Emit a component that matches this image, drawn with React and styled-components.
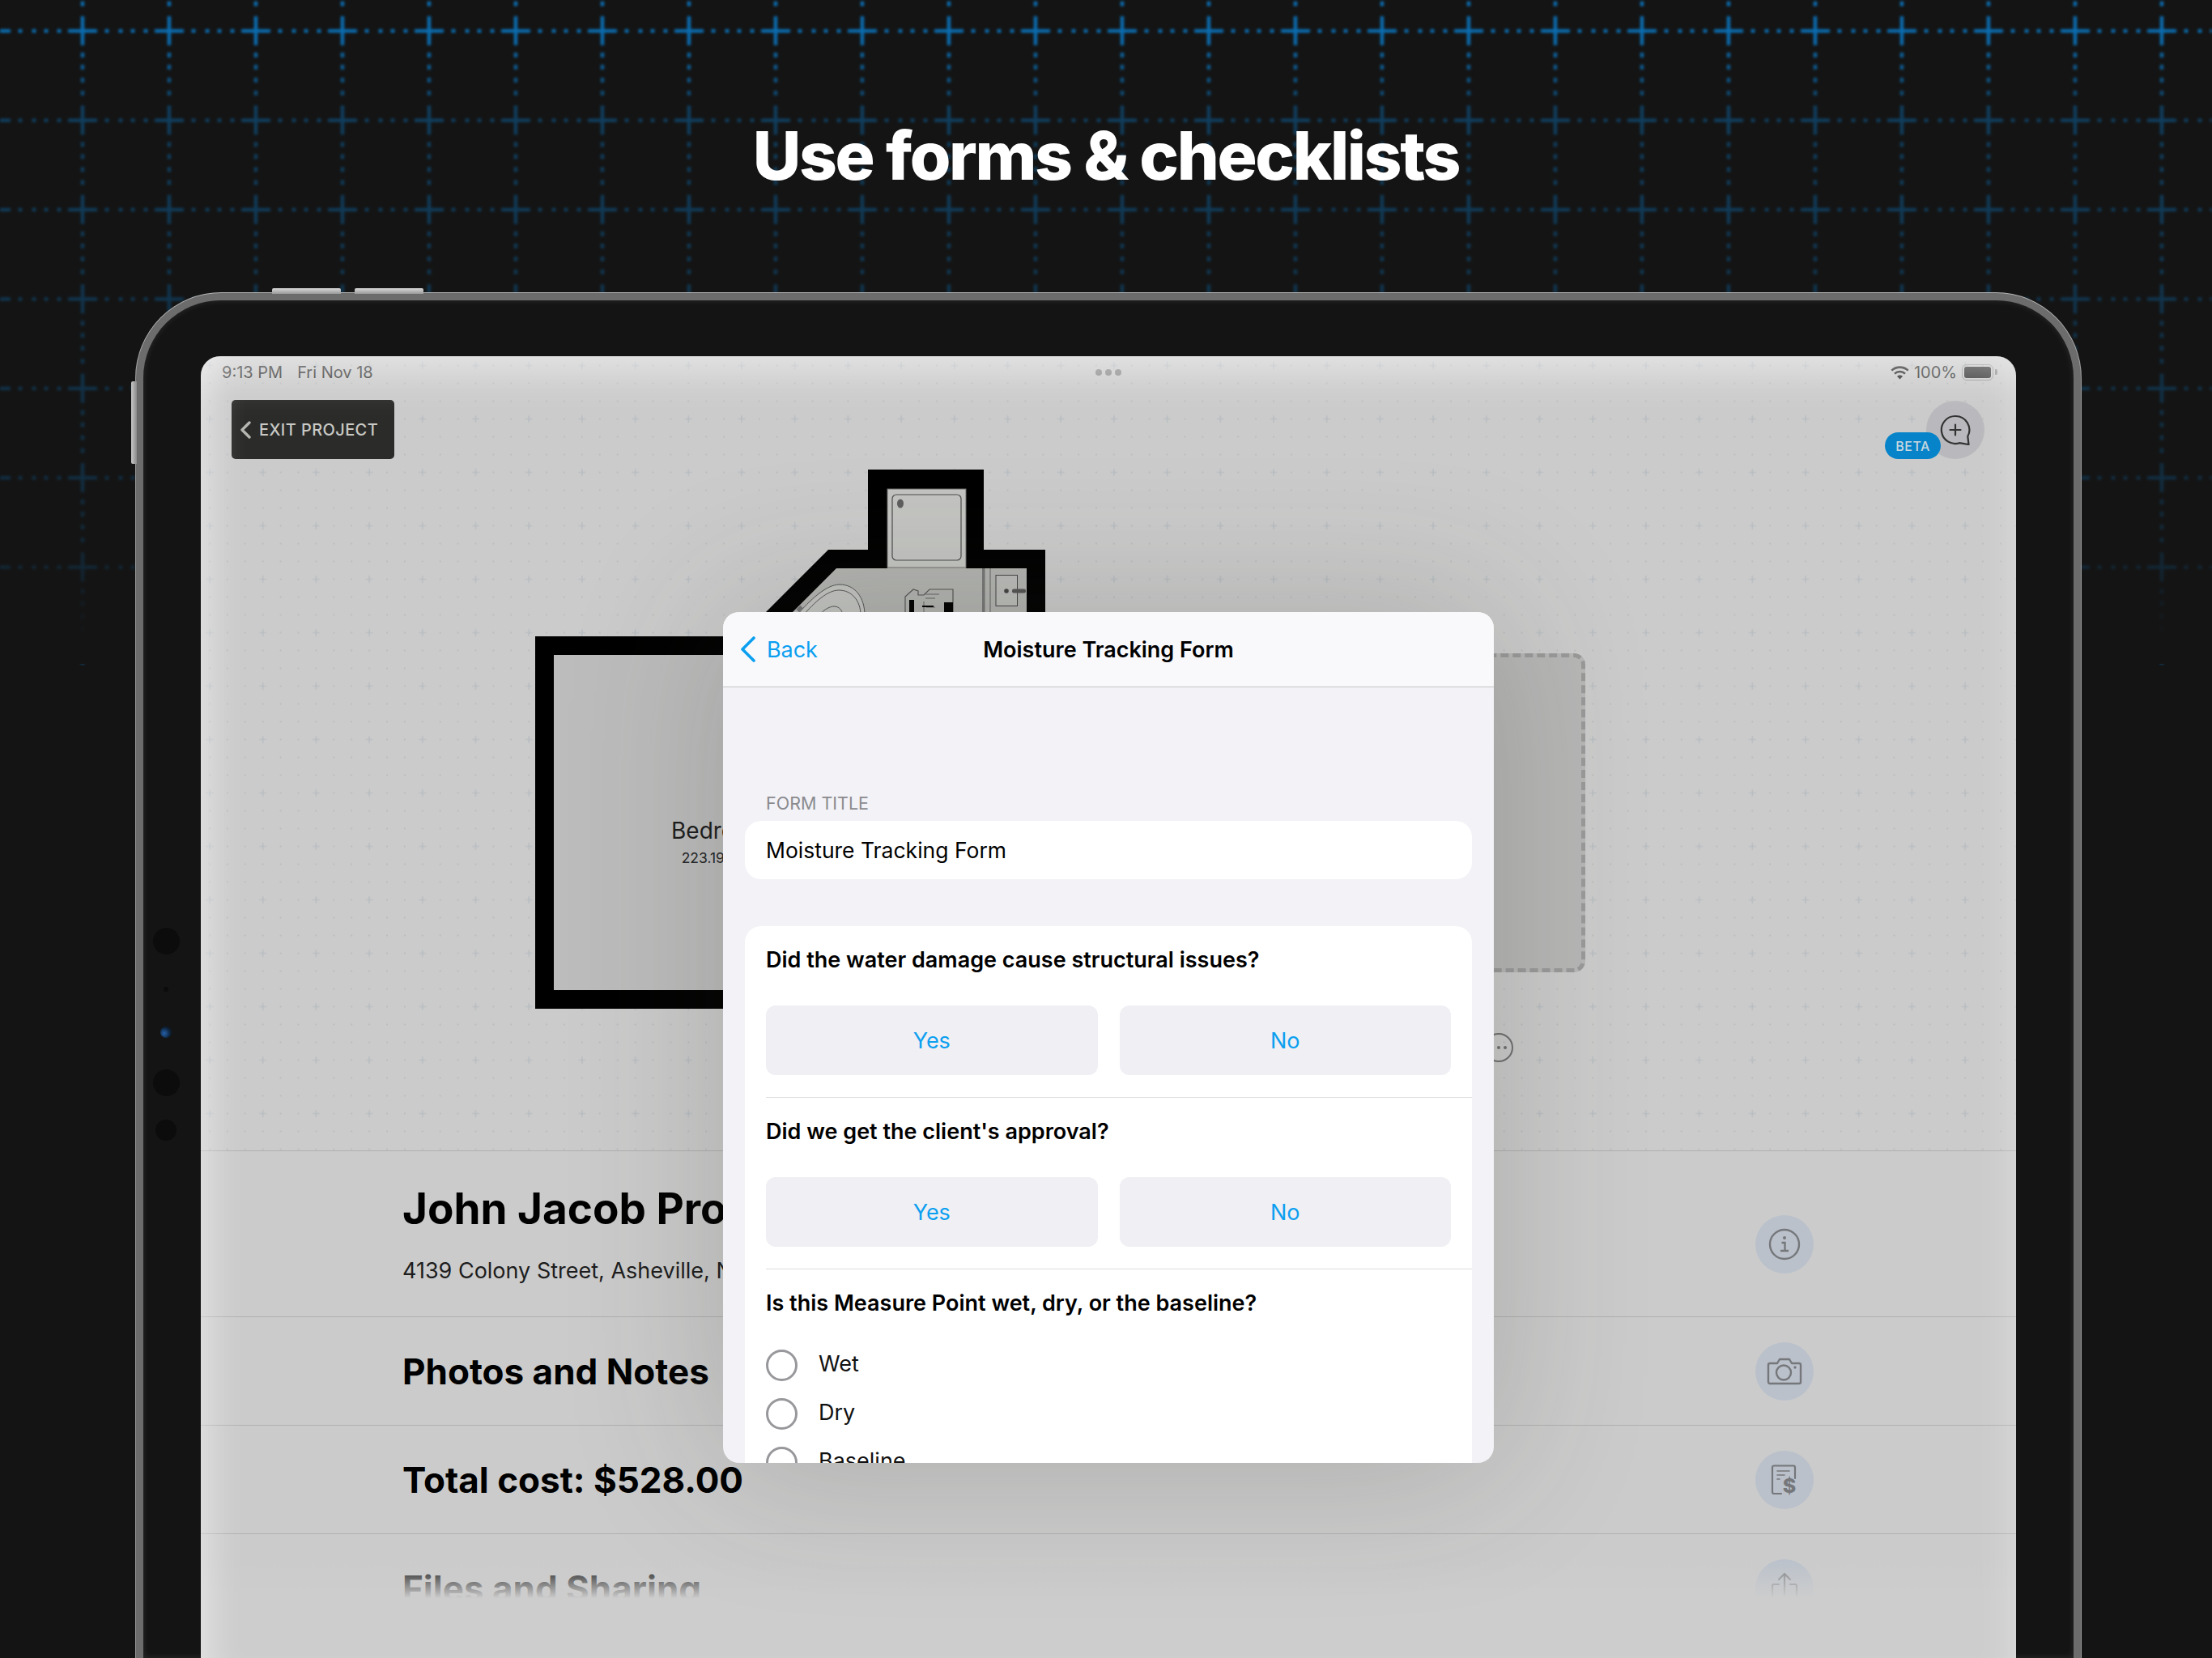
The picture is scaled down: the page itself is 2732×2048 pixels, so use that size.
import React from 'react';
import styled, { createGlobalStyle } from 'styled-components';

const GlobalStyle = createGlobalStyle`
    html, body {
        margin: 0;
        padding: 0;
        background: #141414;
        font-family: "Inter", "Liberation Sans", sans-serif;
    }
    * {
        box-sizing: border-box;
    }
`;

const Page = styled.div`
    position: relative;
    width: 2732px;
    height: 2048px;
    overflow: hidden;
    background: #141414;
    display: flex;
    flex-direction: column;
`;
const Backdrop = styled.div`
    position: absolute;
    inset: 0;
    height: 820px;
    &::after {
        content: '';
        position: absolute;
        inset: 0;
        background: linear-gradient(
            to bottom,
            rgba(20, 20, 20, 0.12) 0,
            rgba(20, 20, 20, 0.12) 50px,
            rgba(20, 20, 20, 0.58) 135px,
            rgba(20, 20, 20, 0.62) 258px,
            rgba(20, 20, 20, 0.68) 370px,
            rgba(20, 20, 20, 0.74) 590px,
            rgba(20, 20, 20, 0.82) 700px,
            rgba(20, 20, 20, 1) 790px
        );
    }
    svg {
        display: block;
        filter: blur(1.6px);
    }
`;
const Title = styled.h1`
    position: relative;
    height: 362px;
    flex: none;
    margin: 0;
    padding-top: 143px;
    text-align: center;
    color: #fff;
    font-family: "Inter", "Lato", sans-serif;
    font-weight: 800;
    font-size: 82px;
    line-height: 100px;
    letter-spacing: -2.4px;
`;
const Device = styled.div`
    position: relative;
    flex: 1;
    width: 2402px;
    margin-left: 168px;
    padding: 69px 71px 0;
    display: flex;
    background: #141414;
    border: 9px solid #6c6c6c;
    border-bottom: none;
    border-radius: 105px 105px 0 0;
    box-shadow: 0 -1px 0 #b5b5b5, -1px 0 0 #9a9a9a, 1px 0 0 #9a9a9a, inset 0 0 8px rgba(255, 255, 255, 0.1);
`;
const TopKey = styled.div`
    position: absolute;
    top: -15px;
    left: ${props => props.$left}px;
    width: 85px;
    height: 7px;
    border-radius: 2px 2px 0 0;
    background: linear-gradient(to bottom, #d8d8d8, #9a9a9a);
`;
const SideKey = styled.div`
    position: absolute;
    left: -15px;
    top: 100px;
    width: 7px;
    height: 102px;
    border-radius: 2px 0 0 2px;
    background: linear-gradient(to right, #c8c8c8, #8a8a8a);
`;
const Sensors = styled.div`
    position: absolute;
    left: 11px;
    top: 775px;
    width: 34px;
    display: flex;
    flex-direction: column;
    align-items: center;
`;
const Sensor = styled.div`
    flex: none;
    width: ${props => props.$size}px;
    height: ${props => props.$size}px;
    margin-top: ${props => props.$gap}px;
    border-radius: 50%;
    background: ${props => (props.$lens ? 'radial-gradient(circle at 35% 60%, #2560a8, #0c2036 60%, #111)' : '#0c0c0c')};
`;
const Screen = styled.div`
    position: relative;
    flex: 1;
    display: flex;
    flex-direction: column;
    overflow: hidden;
    background: #cbcbcb;
    border-radius: 24px 24px 0 0;
    color: #000;
`;

/* floor plan area */
const Canvas = styled.div`
    position: relative;
    flex: none;
    height: 981px;
`;
const DotGrid = styled.svg`
    position: absolute;
    inset: 0;
    width: 100%;
    height: 100%;
`;
const StatusBar = styled.div`
    position: relative;
    height: 40px;
    padding: 0 24px 0 26px;
    display: grid;
    grid-template-columns: 1fr auto 1fr;
    align-items: center;
    font-size: 20px;
    color: #3d3d3d;
`;
const StatusLeft = styled.div`
    display: flex;
    gap: 18px;
`;
const StatusDots = styled.div`
    display: flex;
    gap: 4px;
    margin-left: -3px;
`;
const StatusDot = styled.span`
    width: 8px;
    height: 8px;
    border-radius: 50%;
    background: #8e8e8e;
`;
const StatusRight = styled.div`
    display: flex;
    align-items: center;
    justify-content: flex-end;
    gap: 6px;
`;
const Battery = styled.div`
    position: relative;
    width: 39px;
    height: 20px;
    padding: 2px;
    border: 1.5px solid #9a9a9a;
    border-radius: 6px;
    margin-right: 4px;
    &::before {
        content: '';
        display: block;
        height: 100%;
        border-radius: 3px;
        background: #3b3b3b;
    }
    &::after {
        content: '';
        position: absolute;
        right: -6px;
        top: 5px;
        width: 3px;
        height: 7px;
        border-radius: 0 2px 2px 0;
        background: #8f8f8f;
    }
`;
const ToolRow = styled.div`
    position: relative;
    display: flex;
    justify-content: space-between;
    align-items: flex-start;
    margin-top: 14px;
    padding: 0 39px 0 38px;
`;
const ExitButton = styled.div`
    width: 201px;
    height: 73px;
    padding-left: 11px;
    display: flex;
    align-items: center;
    gap: 10px;
    background: #2b2c29;
    border-radius: 5px;
    color: #c9c9c5;
    font-size: 20px;
    font-weight: 500;
    letter-spacing: 0.4px;
`;
const ChatButton = styled.div`
    position: relative;
    width: 72px;
    height: 72px;
    margin-top: 1px;
    border-radius: 50%;
    background: #b9b9bd;
    display: flex;
    align-items: center;
    justify-content: center;
`;
const BetaBadge = styled.div`
    position: absolute;
    left: -51px;
    top: 39px;
    width: 69px;
    height: 33px;
    border-radius: 17px;
    background: #0784c9;
    color: #c9d7df;
    font-size: 16px;
    font-weight: 500;
    letter-spacing: 0.5px;
    display: flex;
    align-items: center;
    justify-content: center;
`;
const Bathroom = styled.svg`
    position: absolute;
    left: 692px;
    top: 135px;
    width: 360px;
    height: 185px;
`;
const Bedroom = styled.div`
    position: absolute;
    left: 413px;
    top: 346px;
    width: 456px;
    height: 460px;
    border: 23px solid #000;
    background: #bcbcbc;
    display: flex;
    flex-direction: column;
    align-items: center;
    padding-top: 200px;
`;
const RoomName = styled.div`
    font-size: 28px;
    line-height: 34px;
    color: #1c1c1c;
`;
const RoomArea = styled.div`
    margin-top: 7px;
    font-size: 17.5px;
    line-height: 20px;
    color: #262626;
`;
const DraftRoom = styled.div`
    position: absolute;
    left: 1352px;
    top: 367px;
    width: 358px;
    height: 394px;
    border: 5px dashed #9a9a9a;
    border-radius: 14px;
    background: #b7b7b6;
`;
const RoomMenu = styled.svg`
    position: absolute;
    left: 1584px;
    top: 835px;
    width: 38px;
    height: 38px;
`;

/* project rows */
const Panel = styled.div`
    flex: 1;
    display: flex;
    flex-direction: column;
`;
const Row = styled.div`
    flex: none;
    height: ${props => props.$height}px;
    padding: 0 250px 0 249px;
    display: flex;
    align-items: center;
    justify-content: space-between;
    border-top: 1px solid #b0b0b0;
`;
const RowHeading = styled.div`
    font-size: 44px;
    line-height: 56px;
    font-weight: 700;
`;
const ProjectName = styled.div`
    font-size: 53px;
    line-height: 66px;
    font-weight: 700;
`;
const ProjectAddress = styled.div`
    margin-top: 26px;
    font-size: 27px;
    line-height: 36px;
    color: #1d1d1d;
`;
const RoundIcon = styled.div`
    flex: none;
    width: 72px;
    height: 72px;
    margin-top: ${props => props.$shift || 0}px;
    border-radius: 50%;
    background: #bac1cb;
    display: flex;
    align-items: center;
    justify-content: center;
    color: #75777a;
`;
const FadeOut = styled.div`
    position: absolute;
    left: 0;
    right: 0;
    bottom: 0;
    height: 123px;
    background: linear-gradient(to bottom, rgba(205, 205, 205, 0) 0, #cdcdcd 40%);
`;
const Glare = styled.div`
    position: absolute;
    inset: 0;
    pointer-events: none;
    box-shadow: inset 0 50px 50px -30px rgba(255, 255, 255, 0.5), inset 45px 0 40px -30px rgba(255, 255, 255, 0.4),
        inset -45px 0 40px -30px rgba(255, 255, 255, 0.2);
`;

/* form sheet */
const Sheet = styled.div`
    position: absolute;
    left: 645px;
    top: 316px;
    width: 952px;
    height: 1051px;
    overflow: hidden;
    border-radius: 20px;
    background: #f2f2f7;
`;
const SheetShadow = styled.div`
    position: absolute;
    left: 645px;
    top: 316px;
    width: 952px;
    height: 1051px;
    border-radius: 20px;
    box-shadow: 0 0 190px rgba(50, 55, 45, 0.22);
`;
const SheetHeader = styled.div`
    height: 93px;
    padding: 0 22px;
    display: grid;
    grid-template-columns: 1fr auto 1fr;
    align-items: center;
    background: #f9f9fc;
    border-bottom: 1px solid #c4c4c7;
`;
const BackLink = styled.div`
    display: flex;
    align-items: center;
    gap: 14px;
    color: #0c9ff0;
    font-size: 27px;
    letter-spacing: -0.1px;
`;
const SheetTitle = styled.div`
    font-size: 27px;
    font-weight: 600;
    color: #000;
`;
const SheetBody = styled.div`
    padding: 130px 27px 0;
`;
const FieldLabel = styled.div`
    padding-left: 26px;
    font-size: 21.5px;
    line-height: 26px;
    color: #8a8a8e;
`;
const TitleField = styled.div`
    height: 72px;
    margin-top: 9px;
    padding-left: 26px;
    display: flex;
    align-items: center;
    background: #fff;
    border-radius: 20px;
    font-size: 26.5px;
    color: #000;
`;
const QuestionCard = styled.div`
    margin-top: 58px;
    padding-left: 26px;
    background: #fff;
    border-radius: 20px 20px 0 0;
    height: 700px;
`;
const QuestionBlock = styled.div`
    padding: 24px 26px 27px 0;
    border-bottom: ${props => (props.$last ? 'none' : '1px solid #dcdcde')};
`;
const QuestionText = styled.div`
    font-size: 27px;
    line-height: 36px;
    font-weight: 600;
    color: #000;
`;
const AnswerRow = styled.div`
    display: grid;
    grid-template-columns: 1fr 1fr;
    gap: 27px;
    margin-top: 38px;
`;
const AnswerButton = styled.div`
    height: 86px;
    border-radius: 12px;
    background: #efeff4;
    display: flex;
    align-items: center;
    justify-content: center;
    color: #0c9ff0;
    font-size: 27px;
`;
const RadioList = styled.div`
    display: flex;
    flex-direction: column;
    gap: 21px;
    margin-top: 39px;
`;
const RadioRow = styled.div`
    display: flex;
    align-items: center;
    gap: 26px;
`;
const RadioCircle = styled.div`
    flex: none;
    width: 39px;
    height: 39px;
    border: 3.5px solid #98989c;
    border-radius: 50%;
`;
const RadioLabel = styled.div`
    padding-bottom: 4px;
    font-size: 27px;
    line-height: 34px;
    color: #111;
`;

const Chevron = ({ width, height, stroke, color }) => (
    <svg width={width} height={height} viewBox={`0 0 ${width} ${height}`} fill="none">
        <polyline
            points={`${width - 2},2 2,${height / 2} ${width - 2},${height - 2}`}
            stroke={color}
            strokeWidth={stroke}
            strokeLinecap="round"
            strokeLinejoin="round"
        />
    </svg>
);

const BackdropGrid = () => {
    const horizontal = [30, 47, 62, 78];
    const vertical = [30, 45, 61, 77];
    return (
        <svg width="2732" height="820">
            <defs>
                <pattern id="cross" x="48.5" y="-17.2" width="107" height="110.4" patternUnits="userSpaceOnUse">
                    <g fill="#0a78c4">
                        <rect x="35.5" y="53.2" width="36" height="4.5" />
                        <rect x="51.2" y="37.2" width="4.5" height="36" />
                        {horizontal.map(d => <rect key={d} x={53.5 + d - 2.5} y="53.2" width="5" height="4.5" />)}
                        {horizontal.slice(2).map(d => <rect key={d} x={53.5 + d - 107 - 2.5} y="53.2" width="5" height="4.5" />)}
                        {vertical.map(d => <rect key={d} x="51.2" y={55.2 + d - 3 > 110 ? 55.2 + d - 110.4 - 3 : 55.2 + d - 3} width="4.5" height="6" />)}
                    </g>
                </pattern>
            </defs>
            <rect width="2732" height="820" fill="url(#cross)" />
        </svg>
    );
};

const CanvasDots = () => {
    const steps = [-1, 0, 1];
    return (
        <DotGrid>
            <defs>
                <pattern id="dots" x="-21.85" y="-21.5" width="65.7" height="66" patternUnits="userSpaceOnUse">
                    {steps.map(a =>
                        steps.map(b =>
                            a === 0 && b === 0 ? null : (
                                <circle key={`${a}${b}`} cx={32.85 + a * 21.9} cy={33 + b * 22} r="0.9" fill="#b3b7ba" />
                            )
                        )
                    )}
                    <path d="M28.35 33h9M32.85 28.5v9" stroke="#b4b9bf" strokeWidth="1.2" />
                </pattern>
            </defs>
            <rect width="100%" height="100%" fill="url(#dots)" />
        </DotGrid>
    );
};

const BathroomPlan = () => (
    <Bathroom viewBox="940 575 360 185">
        <path
            d="M1072 580H1215V679H1291V760H942L1023 679H1072Z"
            fill="#000"
        />
        <path d="M1033 702H1096V700H1193V702H1268V760H975Z" fill="#b3b4b1" />
        <rect x="1096" y="604" width="97" height="97" fill="#c4c5c2" stroke="#6e6e6e" strokeWidth="1" />
        <rect x="1102" y="611" width="85" height="81" rx="5" fill="none" stroke="#4c4c4c" strokeWidth="1.2" />
        <ellipse cx="1112" cy="622" rx="4" ry="5.5" fill="#5f5f5f" />
        <path d="M984 760C1000 742 1020 722 1037 722C1056 722 1068 738 1068 760Z" fill="#c4c5c2" stroke="#555" strokeWidth="1" />
        <path d="M992 760C1006 744 1022 729 1036 729C1052 729 1063 742 1063 760" fill="none" stroke="#555" strokeWidth="1" />
        <path d="M1012 760C1018 752 1026 749 1030 749C1036 749 1040 753 1041 760" fill="none" stroke="#555" strokeWidth="1" />
        <rect x="984" y="750" width="7" height="5" fill="#777" transform="rotate(-45 987 752)" />
        <path d="M1118 760V737L1128 728L1134 730V735H1141L1148 728H1177V760" fill="none" stroke="#555" strokeWidth="1.2" />
        <path d="M1143 734H1160M1143 739H1155M1141 743V760M1144 750H1155" fill="none" stroke="#666" strokeWidth="1" />
        <rect x="1123" y="741" width="6" height="19" fill="#000" />
        <rect x="1166" y="744" width="11" height="16" fill="#000" />
        <rect x="1139" y="748" width="14" height="2" fill="#000" />
        <rect x="1213" y="702" width="3.5" height="58" fill="#777" />
        <path d="M1223 702V760" stroke="#666" strokeWidth="1" />
        <rect x="1230" y="710.5" width="26.5" height="38" fill="#bcbdba" stroke="#444" strokeWidth="1" />
        <circle cx="1243" cy="730" r="2.8" fill="#444" />
        <rect x="1250" y="727.5" width="17" height="5" rx="2" fill="#555" />
    </Bathroom>
);

const ChatPlusIcon = () => (
    <svg width="38" height="38" viewBox="0 0 38 38" fill="none" stroke="#333" strokeWidth="2.2" strokeLinejoin="round" strokeLinecap="round">
        <path d="M19 2a17 17 0 1 0 5 33.2l11.5 1.8-1.2-10A17 17 0 0 0 19 2Z" />
        <path d="M19 12.5v13M12.5 19h13" />
    </svg>
);
const WifiIcon = () => (
    <svg width="23" height="17" viewBox="0 0 23 17" fill="none" stroke="#2e2e2e" strokeWidth="2.6">
        <path d="M1.3 5.6a15 15 0 0 1 20.4 0" />
        <path d="M5 9.6a9.6 9.6 0 0 1 13 0" />
        <path d="M11.5 16.5l-3.6-3.7a5.4 5.4 0 0 1 7.2 0Z" fill="#2e2e2e" stroke="none" />
    </svg>
);
const InfoIcon = () => (
    <svg width="40" height="40" viewBox="0 0 40 40" fill="none" stroke="currentColor" strokeWidth="2.4">
        <circle cx="20" cy="20" r="18" />
        <circle cx="20" cy="12" r="2" fill="currentColor" stroke="none" />
        <path d="M16.5 18h4v10M15 28h10" />
    </svg>
);
const CameraIcon = () => (
    <svg width="44" height="34" viewBox="0 0 44 34" fill="none" stroke="currentColor" strokeWidth="2.4" strokeLinejoin="round">
        <path d="M4 7h9l3-5h12l3 5h9a2 2 0 0 1 2 2v21a2 2 0 0 1-2 2H4a2 2 0 0 1-2-2V9a2 2 0 0 1 2-2Z" />
        <circle cx="21" cy="18.5" r="9" />
        <circle cx="35" cy="12" r="1.7" fill="currentColor" stroke="none" />
    </svg>
);
const ReceiptIcon = () => (
    <svg width="34" height="38" viewBox="0 0 34 38" fill="none" stroke="currentColor" strokeWidth="2.2" strokeLinecap="round">
        <path d="M13 36H4a2 2 0 0 1-2-2V3.5A2 2 0 0 1 4 1.5h24a2 2 0 0 1 2 2V17" />
        <path d="M8 8h15M8 13h9M8 18h3" strokeWidth="1.6" />
        <text x="23" y="35" textAnchor="middle" fontFamily="Inter, sans-serif" fontWeight="800" fontSize="25" fill="currentColor" stroke="none">$</text>
    </svg>
);
const ShareIcon = () => (
    <svg width="34" height="40" viewBox="0 0 34 40" fill="none" stroke="currentColor" strokeWidth="2.2" strokeLinecap="round" strokeLinejoin="round">
        <path d="M10 15H4a2 2 0 0 0-2 2v21M24 15h6a2 2 0 0 1 2 2v21M17 28V2M10 9l7-7 7 7" />
    </svg>
);

const Question = ({ text }) => (
    <QuestionBlock>
        <QuestionText>{text}</QuestionText>
        <AnswerRow>
            <AnswerButton>Yes</AnswerButton>
            <AnswerButton>No</AnswerButton>
        </AnswerRow>
    </QuestionBlock>
);

export default function App() {
    return (
        <Page>
            <GlobalStyle />
            <Backdrop>
                <BackdropGrid />
            </Backdrop>
            <Title>Use forms &amp; checklists</Title>
            <Device>
                <TopKey $left={159} />
                <TopKey $left={261} />
                <SideKey />
                <Sensors>
                    <Sensor $size={33} $gap={0} />
                    <Sensor $size={6} $gap={40} />
                    <Sensor $size={14} $gap={43} $lens />
                    <Sensor $size={33} $gap={39} />
                    <Sensor $size={26} $gap={29} />
                </Sensors>
                <Screen>
                    <Canvas>
                        <CanvasDots />
                        <StatusBar>
                            <StatusLeft>
                                <span>9:13 PM</span>
                                <span>Fri Nov 18</span>
                            </StatusLeft>
                            <StatusDots>
                                <StatusDot />
                                <StatusDot />
                                <StatusDot />
                            </StatusDots>
                            <StatusRight>
                                <WifiIcon />
                                <span>100%</span>
                                <Battery />
                            </StatusRight>
                        </StatusBar>
                        <ToolRow>
                            <ExitButton>
                                <Chevron width={13} height={22} stroke={3.4} color="#b5b5b1" />
                                EXIT PROJECT
                            </ExitButton>
                            <ChatButton>
                                <ChatPlusIcon />
                                <BetaBadge>BETA</BetaBadge>
                            </ChatButton>
                        </ToolRow>
                        <BathroomPlan />
                        <Bedroom>
                            <RoomName>Bedroom</RoomName>
                            <RoomArea>223.19 sq ft</RoomArea>
                        </Bedroom>
                        <DraftRoom />
                        <RoomMenu viewBox="0 0 38 38" fill="none">
                            <circle cx="19" cy="19" r="17" stroke="#6f6f6f" strokeWidth="2" />
                            <circle cx="11" cy="19" r="2" fill="#6f6f6f" />
                            <circle cx="19" cy="19" r="2" fill="#6f6f6f" />
                            <circle cx="27" cy="19" r="2" fill="#6f6f6f" />
                        </RoomMenu>
                    </Canvas>
                    <Panel>
                        <Row $height={205}>
                            <div>
                                <ProjectName>John Jacob Project</ProjectName>
                                <ProjectAddress>4139 Colony Street, Asheville, NC</ProjectAddress>
                            </div>
                            <RoundIcon $shift={26}><InfoIcon /></RoundIcon>
                        </Row>
                        <Row $height={134}>
                            <RowHeading>Photos and Notes</RowHeading>
                            <RoundIcon><CameraIcon /></RoundIcon>
                        </Row>
                        <Row $height={134}>
                            <RowHeading>Total cost: $528.00</RowHeading>
                            <RoundIcon><ReceiptIcon /></RoundIcon>
                        </Row>
                        <Row $height={134}>
                            <RowHeading>Files and Sharing</RowHeading>
                            <RoundIcon><ShareIcon /></RoundIcon>
                        </Row>
                    </Panel>
                    <FadeOut />
                    <Glare />
                    <SheetShadow />
                    <Sheet>
                        <SheetHeader>
                            <BackLink>
                                <Chevron width={18} height={32} stroke={3.6} color="#0c9ff0" />
                                Back
                            </BackLink>
                            <SheetTitle>Moisture Tracking Form</SheetTitle>
                        </SheetHeader>
                        <SheetBody>
                            <FieldLabel>FORM TITLE</FieldLabel>
                            <TitleField>Moisture Tracking Form</TitleField>
                            <QuestionCard>
                                <Question text="Did the water damage cause structural issues?" />
                                <Question text="Did we get the client's approval?" />
                                <QuestionBlock $last>
                                    <QuestionText>Is this Measure Point wet, dry, or the baseline?</QuestionText>
                                    <RadioList>
                                        <RadioRow><RadioCircle /><RadioLabel>Wet</RadioLabel></RadioRow>
                                        <RadioRow><RadioCircle /><RadioLabel>Dry</RadioLabel></RadioRow>
                                        <RadioRow><RadioCircle /><RadioLabel>Baseline</RadioLabel></RadioRow>
                                    </RadioList>
                                </QuestionBlock>
                            </QuestionCard>
                        </SheetBody>
                    </Sheet>
                </Screen>
            </Device>
        </Page>
    );
}
